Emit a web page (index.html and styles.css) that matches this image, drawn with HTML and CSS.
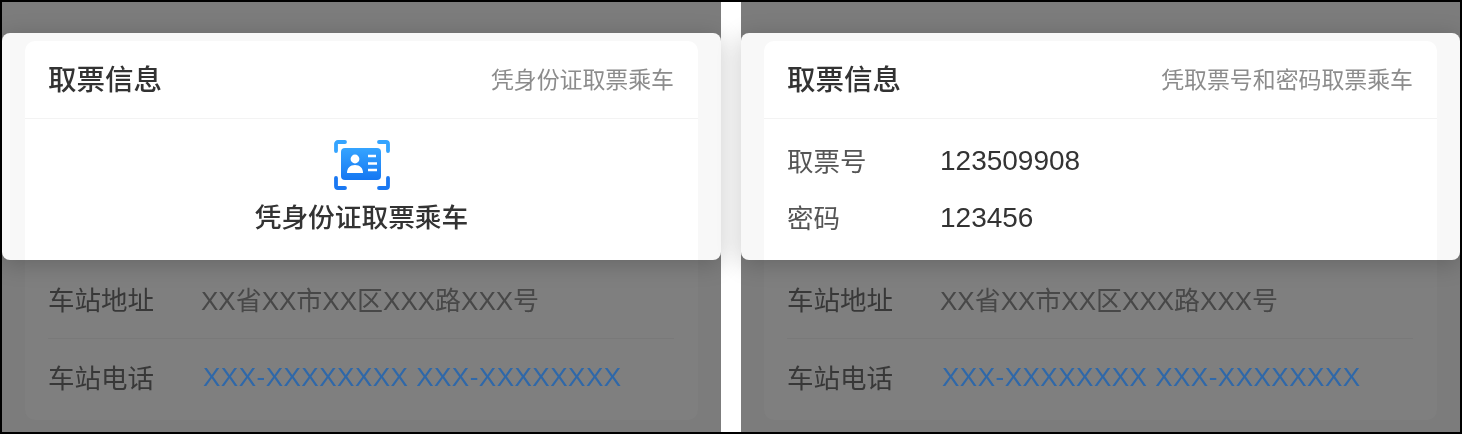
FILE: index.html
```html
<!DOCTYPE html>
<html lang="zh-CN">
<head>
<meta charset="UTF-8">
<meta name="viewport" content="width=device-width, initial-scale=1.0">
<title>取票信息</title>
<link rel="stylesheet" href="styles.css">
</head>
<body>

<div class="frame">
    <!-- 身份证取票 -->
    <div class="panel">
        <div class="sheet">
            <div class="sheet-inner">
                <div class="sheet-head">
                    <span class="sheet-title">取票信息</span>
                    <span class="sheet-note">凭身份证取票乘车</span>
                </div>
                <div class="id-tip">
                    <svg class="id-icon" width="56" height="50" viewBox="0 0 56 50">
                        <defs>
                            <linearGradient id="cardFill" x1="0" y1="0" x2="0" y2="1">
                                <stop offset="0" stop-color="#35a4ff"/>
                                <stop offset="1" stop-color="#1577f2"/>
                            </linearGradient>
                        </defs>
                        <g fill="none" stroke-width="3.8" stroke-linecap="round" stroke-linejoin="round">
                            <path d="M2 11V4a2 2 0 0 1 2-2h7" stroke="#34a4ff"/>
                            <path d="M45 2h7a2 2 0 0 1 2 2v7" stroke="#34a4ff"/>
                            <path d="M2 38v8a2 2 0 0 0 2 2h7" stroke="#1a78f2"/>
                            <path d="M45 48h7a2 2 0 0 0 2-2v-8" stroke="#1a78f2"/>
                        </g>
                        <rect x="7" y="8" width="40" height="32" rx="4" fill="url(#cardFill)"/>
                        <circle cx="21" cy="19" r="4.4" fill="#fff"/>
                        <path d="M13 33c0-5 3-8 8-8s8 3 8 8z" fill="#fff"/>
                        <path d="M34 16h8M34 23.500h9M34 30h9" stroke="#fff" stroke-width="2.400" fill="none"/>
                    </svg>
                    <div class="id-text">凭身份证取票乘车</div>
                </div>
            </div>
        </div>
        <div class="station">
            <div class="row">
                <span class="row-label">车站地址</span>
                <span class="row-value">XX省XX市XX区XXX路XXX号</span>
            </div>
            <div class="row">
                <span class="row-label">车站电话</span>
                <span class="row-link">XXX-XXXXXXXX XXX-XXXXXXXX</span>
            </div>
        </div>
    </div>

    <!-- 取票号取票 -->
    <div class="panel">
        <div class="sheet">
            <div class="sheet-inner">
                <div class="sheet-head">
                    <span class="sheet-title">取票信息</span>
                    <span class="sheet-note">凭取票号和密码取票乘车</span>
                </div>
                <div class="code-list">
                    <div class="code-row">
                        <span class="code-label">取票号</span>
                        <span class="code-value">123509908</span>
                    </div>
                    <div class="code-row">
                        <span class="code-label">密码</span>
                        <span class="code-value">123456</span>
                    </div>
                </div>
            </div>
        </div>
        <div class="station">
            <div class="row">
                <span class="row-label">车站地址</span>
                <span class="row-value">XX省XX市XX区XXX路XXX号</span>
            </div>
            <div class="row">
                <span class="row-label">车站电话</span>
                <span class="row-link">XXX-XXXXXXXX XXX-XXXXXXXX</span>
            </div>
        </div>
    </div>
</div>

</body>
</html>
```

FILE: styles.css
```css
body {
    font-family: "Liberation Sans", "Noto Sans CJK SC", sans-serif;
    background-color: #fff;
    margin: 0;
    padding: 0;
}

.frame {
    display: flex;
    gap: 20px;
    width: 1458px;
    height: 430px;
    border: 2px solid #000;
    overflow: hidden;
}

.panel {
    width: 719px;
    padding-top: 31px;
    background-color: #7c7c7c;
    filter: blur(0.6px);
}

.sheet {
    position: relative;
    height: 219px;
    padding: 8px 23px 0;
    background-color: #f8f8f8;
    border-radius: 8px;
    box-shadow: 0 4px 24px rgba(0, 0, 0, 0.2);
}

.sheet-inner {
    height: 219px;
    background-color: #fff;
    border-radius: 10px 10px 0 0;
}

.sheet-head {
    box-sizing: border-box;
    display: flex;
    justify-content: space-between;
    align-items: center;
    height: 78px;
    padding: 0 24px 4px 23px;
    border-bottom: 1px solid #f3f3f3;
}

.sheet-title {
    font-size: 28.5px;
    font-weight: 500;
    color: #333;
}

.sheet-note {
    font-size: 22.9px;
    color: #8c8c8c;
}

.id-tip {
    display: flex;
    flex-direction: column;
    align-items: center;
    padding-top: 21px;
}

.id-icon {
    display: block;
}

.id-text {
    margin-top: 6px;
    font-size: 26.7px;
    font-weight: 500;
    line-height: 44px;
    color: #333;
}

.code-list {
    padding: 13px 24px 0 23px;
}

.code-row {
    display: flex;
    align-items: center;
    height: 57px;
}

.code-label {
    width: 153px;
    padding-bottom: 2px;
    font-size: 26.5px;
    color: #555;
}

.code-value {
    font-size: 28px;
    color: #333;
}

.station {
    height: 159px;
    margin: 0 23px;
    padding: 1px 24px 0 23px;
    background-color: #7f7f7f;
    border-radius: 0 0 10px 10px;
}

.row {
    display: flex;
    align-items: center;
    height: 77px;
}

.row + .row {
    border-top: 1px solid #797979;
}

.row-label {
    width: 153px;
    padding-bottom: 3px;
    font-size: 26.5px;
    color: #383838;
}

.row-value {
    padding-bottom: 3px;
    font-size: 26px;
    color: #484848;
}

.row-link {
    margin-left: 2px;
    font-size: 26px;
    letter-spacing: 0.5px;
    color: #2f68a9;
}
```
